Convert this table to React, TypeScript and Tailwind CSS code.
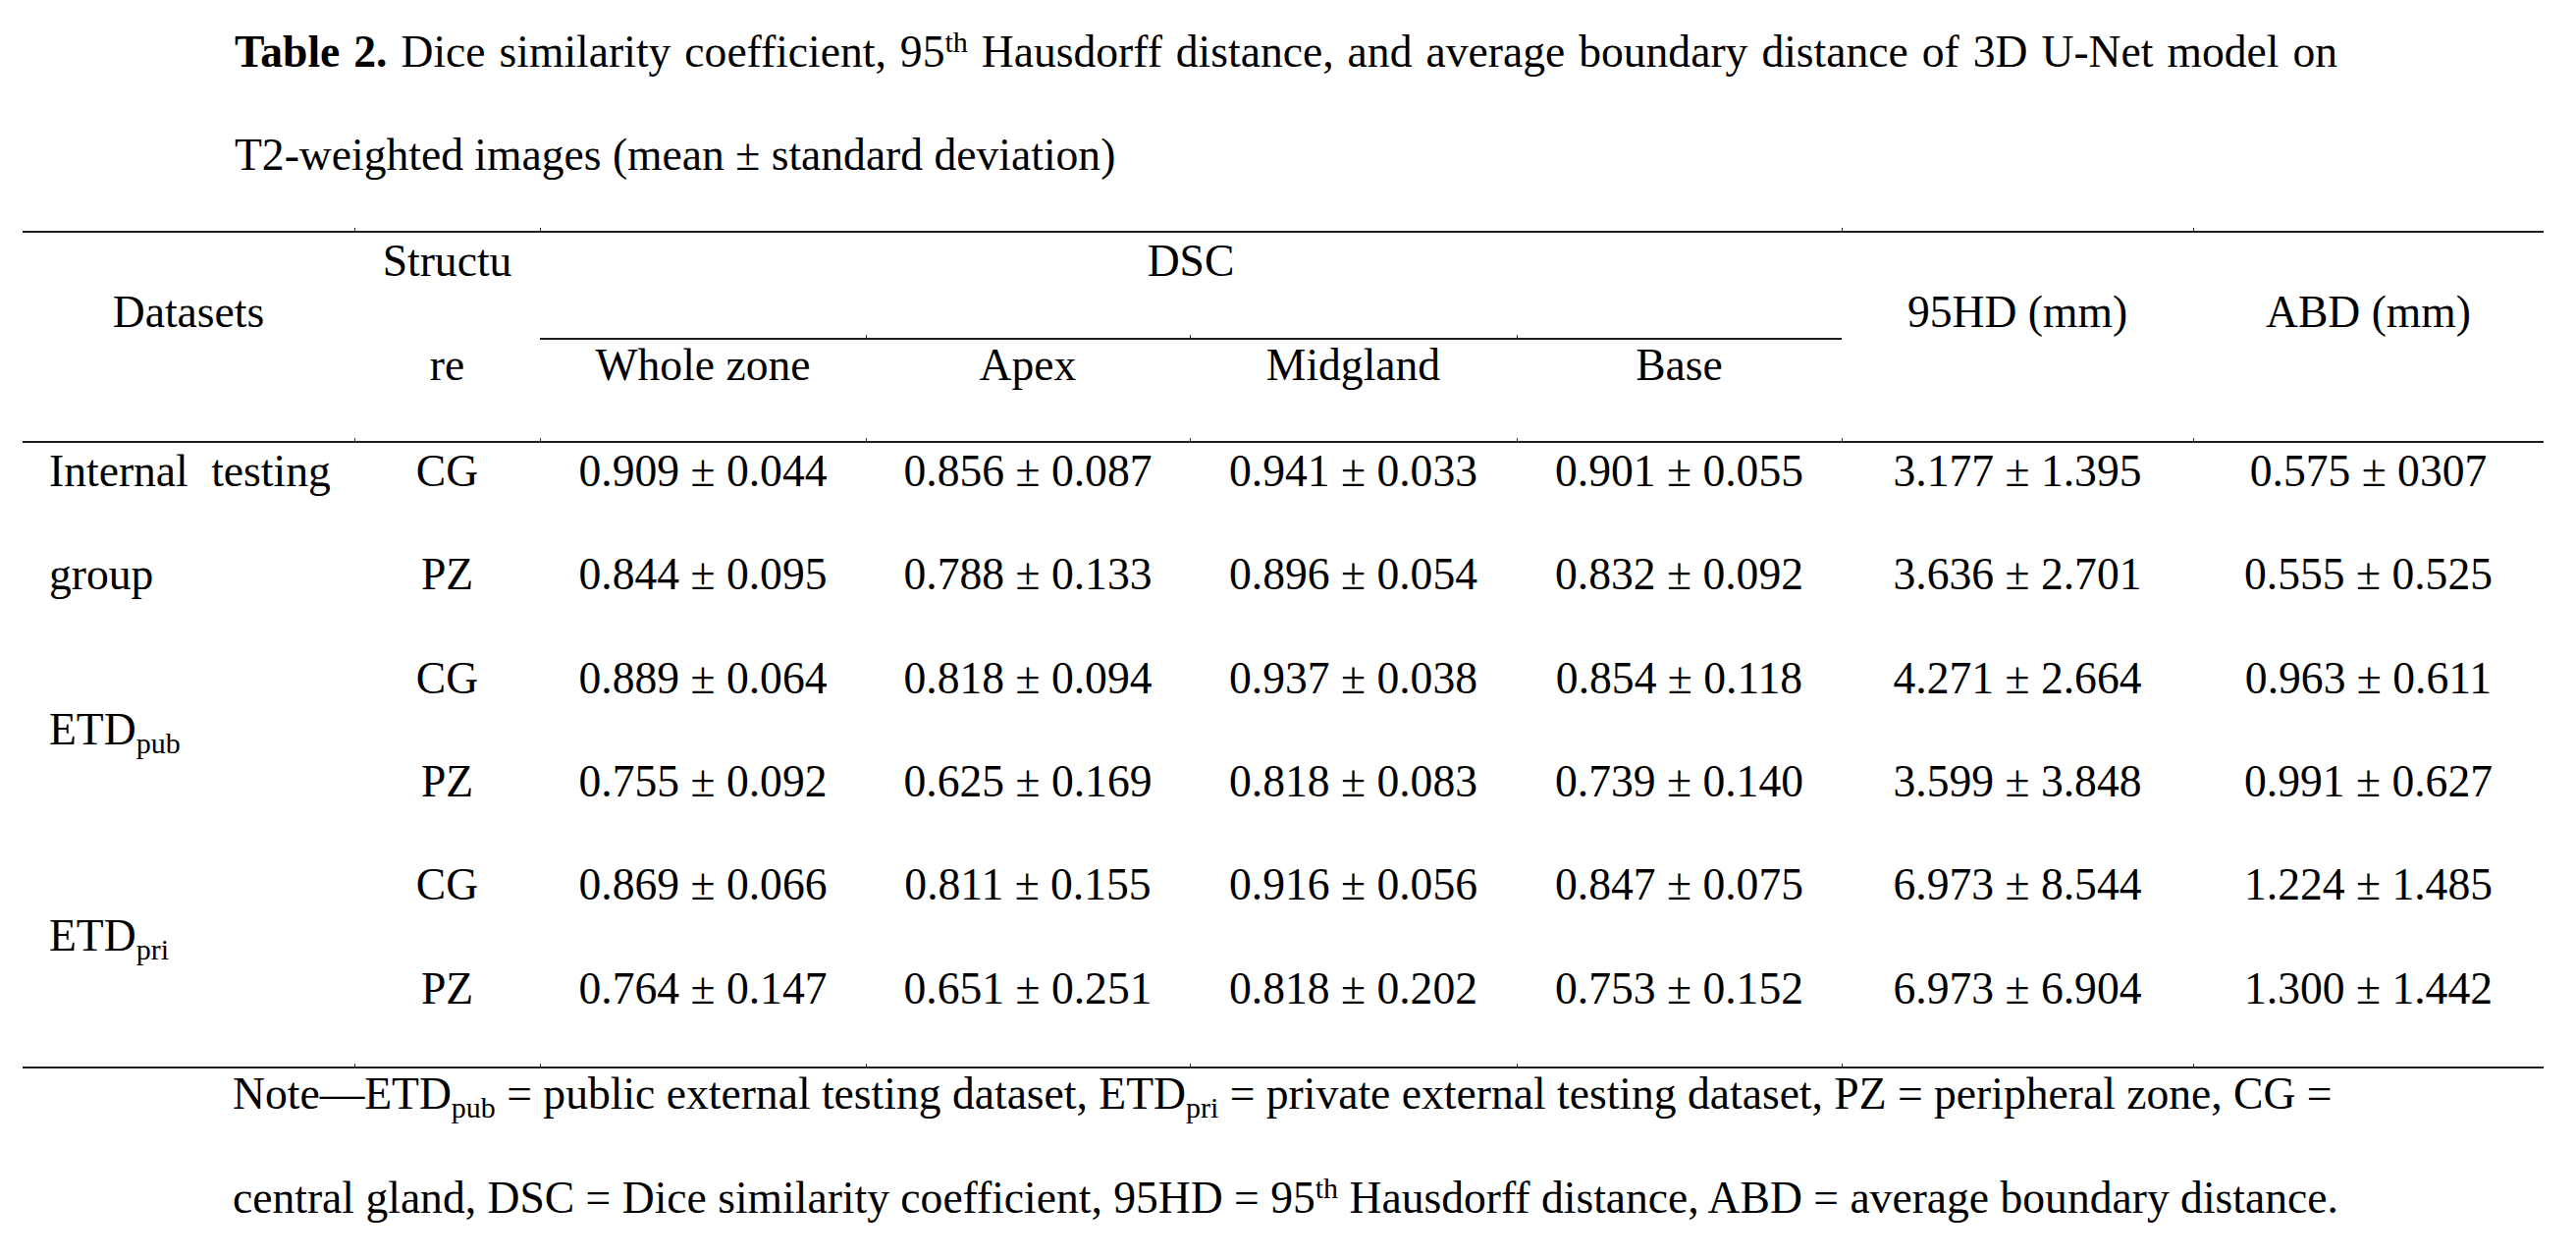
const GRID = "grid grid-cols-[338px_189px_332px_330px_333px_331px_358px_357px]";

const ROWS = [
  ["CG", "0.909 ± 0.044", "0.856 ± 0.087", "0.941 ± 0.033", "0.901 ± 0.055", "3.177 ± 1.395", "0.575 ± 0307"],
  ["PZ", "0.844 ± 0.095", "0.788 ± 0.133", "0.896 ± 0.054", "0.832 ± 0.092", "3.636 ± 2.701", "0.555 ± 0.525"],
  ["CG", "0.889 ± 0.064", "0.818 ± 0.094", "0.937 ± 0.038", "0.854 ± 0.118", "4.271 ± 2.664", "0.963 ± 0.611"],
  ["PZ", "0.755 ± 0.092", "0.625 ± 0.169", "0.818 ± 0.083", "0.739 ± 0.140", "3.599 ± 3.848", "0.991 ± 0.627"],
  ["CG", "0.869 ± 0.066", "0.811 ± 0.155", "0.916 ± 0.056", "0.847 ± 0.075", "6.973 ± 8.544", "1.224 ± 1.485"],
  ["PZ", "0.764 ± 0.147", "0.651 ± 0.251", "0.818 ± 0.202", "0.753 ± 0.152", "6.973 ± 6.904", "1.300 ± 1.442"],
];

const COL_START = ["col-start-2", "col-start-3", "col-start-4", "col-start-5", "col-start-6", "col-start-7", "col-start-8"];
const ROW_START = ["row-start-1", "row-start-2", "row-start-3", "row-start-4", "row-start-5", "row-start-6"];

function Sup({ children }: { children: React.ReactNode }) {
  return <sup className="static align-[15px] text-[30px]">{children}</sup>;
}

function Sub({ children }: { children: React.ReactNode }) {
  return <sub className="static align-[-9px] text-[30px]">{children}</sub>;
}

// thin tick marks sitting on top of a rule at cell boundaries
function Ticks({ spans }: { spans: string[] }) {
  return (
    <div className={GRID}>
      {spans.map((span, i) => (
        <div key={i} className={`h-[3px] ${span} ${i > 0 ? "border-l border-[#333]" : ""}`} />
      ))}
    </div>
  );
}

const ALL = ["col-span-1", "col-span-1", "col-span-1", "col-span-1", "col-span-1", "col-span-1", "col-span-1", "col-span-1"];

function Rule() {
  return <div className="h-[2px] bg-[#1e1e1e]" />;
}

export default function App() {
  return (
    <div className="min-h-screen bg-white text-black font-['Liberation_Serif','Times_New_Roman',serif] text-[45.6px]">
      <div className="pl-[239px] leading-[105.4px] whitespace-nowrap">
        <p className="w-[2142px] text-justify [text-align-last:justify]">
          <b>Table 2.</b> Dice similarity coefficient, 95<Sup>th</Sup> Hausdorff distance, and average boundary distance of 3D U-Net model on
        </p>
        <p>T2-weighted images (mean ± standard deviation)</p>
      </div>

      <div className="ml-[23px] mt-[21px] w-[2568px]">
        <Ticks spans={["col-span-1", "col-span-1", "col-span-4", "col-span-1", "col-span-1"]} />
        <Rule />

        {/* header */}
        <div className={`${GRID} grid-rows-[104px_3px_2px_100px] whitespace-nowrap`}>
          <div className="col-start-1 row-start-1 row-span-4 pt-[55px] text-center leading-[51px]">Datasets</div>
          <div className="col-start-2 row-start-1 text-center leading-[57px]">Structu</div>
          <div className="col-start-3 col-span-4 row-start-1 text-center leading-[57px]">DSC</div>
          <div className="col-start-7 row-start-1 row-span-4 pt-[55px] text-center leading-[51px]">95HD (mm)</div>
          <div className="col-start-8 row-start-1 row-span-4 pt-[55px] text-center leading-[51px]">ABD (mm)</div>

          <div className="col-start-4 row-start-2 border-l border-[#333]" />
          <div className="col-start-5 row-start-2 border-l border-[#333]" />
          <div className="col-start-6 row-start-2 border-l border-[#333]" />
          <div className="col-start-3 col-span-4 row-start-3 bg-[#1e1e1e]" />

          <div className="col-start-2 row-start-4 text-center leading-[51px]">re</div>
          <div className="col-start-3 row-start-4 text-center leading-[51px]">Whole zone</div>
          <div className="col-start-4 row-start-4 text-center leading-[51px]">Apex</div>
          <div className="col-start-5 row-start-4 text-center leading-[51px]">Midgland</div>
          <div className="col-start-6 row-start-4 text-center leading-[51px]">Base</div>
        </div>

        <Ticks spans={ALL} />
        <Rule />

        {/* body */}
        <div className={`${GRID} grid-rows-[repeat(6,105.4px)] whitespace-nowrap`}>
          <div className="col-start-1 row-start-1 pl-[27px] leading-[57px] [word-spacing:12px]">Internal testing</div>
          <div className="col-start-1 row-start-2 pl-[27px] leading-[57px]">group</div>
          <div className="col-start-1 row-start-3 row-span-2 pl-[27px] pt-[55px] leading-[51px]">
            ETD<Sub>pub</Sub>
          </div>
          <div className="col-start-1 row-start-5 row-span-2 pl-[27px] pt-[55px] leading-[51px]">
            ETD<Sub>pri</Sub>
          </div>
          {ROWS.map((row, r) =>
            row.map((cell, c) => (
              <div key={`${r}-${c}`} className={`${COL_START[c]} ${ROW_START[r]} text-center leading-[57px]`}>
                {cell}
              </div>
            ))
          )}
        </div>

        <Ticks spans={ALL} />
        <Rule />
      </div>

      <div className="pl-[237px] leading-[51px] whitespace-nowrap">
        <p>
          Note—ETD<Sub>pub</Sub> = public external testing dataset, ETD<Sub>pri</Sub> = private external testing dataset, PZ = peripheral zone, CG =
        </p>
        <p className="mt-[55px]">
          central gland, DSC = Dice similarity coefficient, 95HD = 95<Sup>th</Sup> Hausdorff distance, ABD = average boundary distance.
        </p>
      </div>
    </div>
  );
}
